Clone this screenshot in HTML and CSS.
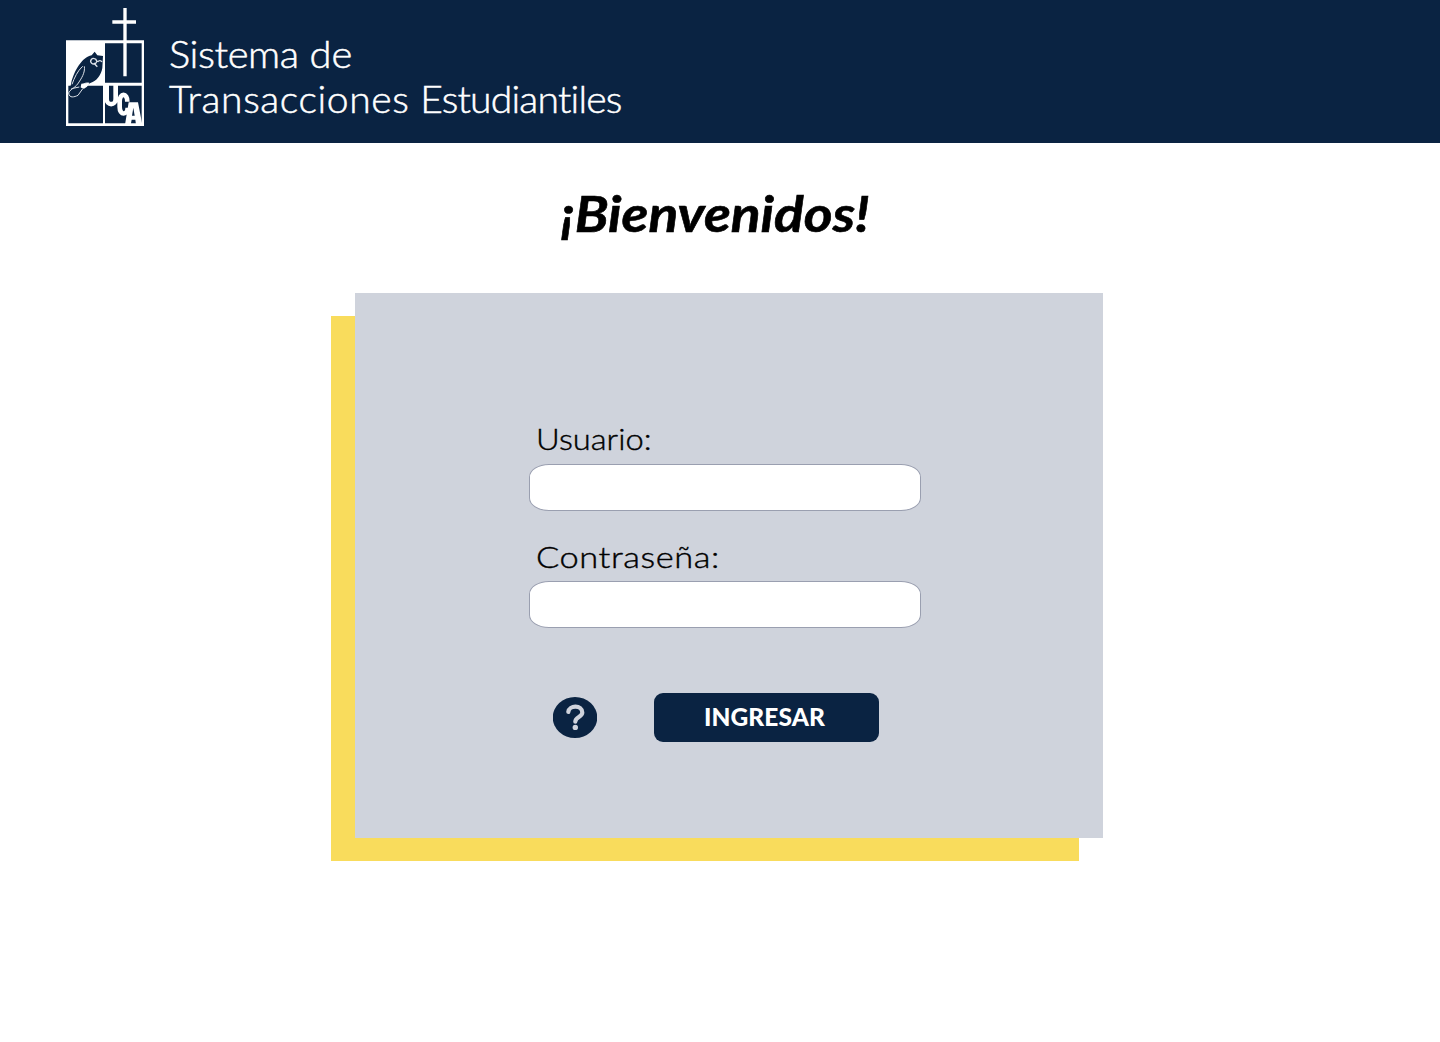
FILE: index.html
```html
<!DOCTYPE html>
<html lang="es">
<head>
<meta charset="utf-8">
<title>Sistema de Transacciones Estudiantiles</title>
<link rel="stylesheet" href="styles.css">
</head>
<body>
<header class="header">
  <svg class="logo" viewBox="33 24 234 354" role="img" aria-label="UCA">
    <path class="light" d="M33 121H267V378H33z"/>
    <path class="dark" d="M150 130H260V248H150zM40 257H144V370H40zM150 257H260V370H150z"/>
    <path class="light" d="M205 24H215V61H243V71H215V229H205V71H172V61H205z"/>
    <path class="dark" d="M119 155L127 166L144 168L142 204C138 226 126 242 106 249L88 259L65 287L42 292C39 275 47 263 49 247C58 213 80 172 110 166z"/>
    <path class="line" d="M88 199C91 218 79 236 68 252C58 265 44 269 41 279C43 296 58 291 69 286L84 265M49 266L73 261M83 199C67 213 58 234 51 253M102 250C93 246 81 253 79 262H87L101 254"/>
    <path class="light" d="M79 251L103 248L96 260L87 266L77 262z"/>
    <path class="eye" d="M120 177A8 8 0 1 0 121 189M121 176L126 184L120 193L127 200M128 186C132 180 138 181 141 186"/>
    <path class="letter" d="M155 253V296C155 318 182 318 182 296V253M217 305C217 278 194 278 194 304V321C194 348 218 345 218 323"/>
    <path class="light" d="M221 307H249L262 374H243L241 359H230L227 374H210z"/>
    <path class="dark" d="M235 323L239 347H231z"/>
  </svg>
  <h1 class="brand"><span class="brand-first"><span class="snug">Sistema</span> de</span><span class="brand-second"><span class="wide">Transacciones</span> <span class="tight">Estudiantiles</span></span></h1>
</header>
<main class="main">
  <h2 class="welcome">¡Bienvenidos!</h2>
  <form class="card">
    <label class="label label-user" for="user">Usuario:</label>
    <input class="field" id="user" type="text">
    <label class="label label-pass" for="pass">Contraseña:</label>
    <input class="field" id="pass" type="password">
    <div class="actions">
      <svg class="help" viewBox="0 0 44 42" role="img" aria-label="Ayuda">
        <ellipse class="help-disc" cx="22" cy="20.5" rx="22.3" ry="20.5"/>
        <path class="help-mark" d="M15.3 15C16 7.8 29.3 7.8 29.3 15.5C29.3 20 22.3 20 22.3 24.7"/>
        <circle class="help-dot" cx="22.3" cy="30.4" r="2.7"/>
      </svg>
      <button class="submit" type="button">INGRESAR</button>
    </div>
  </form>
</main>
</body>
</html>
```
FILE: styles.css
```css
* { box-sizing: border-box; }
body { margin: 0; min-height: 1042px; background: #fff; color: #000; font-family: Lato, "Open Sans", sans-serif; font-variant-ligatures: none; }
.header { display: flex; height: 143px; padding: 8px 66px 0; background: #0a2342; color: #fff; }
.logo { width: 78px; height: 118px; flex: none; }
.light { fill: #fff; }
.dark { fill: #0a2342; }
.line, .eye { fill: none; stroke: #dce1e8; stroke-width: 3; }
.eye { stroke-width: 4; }
.letter { fill: none; stroke: #fff; stroke-width: 14; }
.brand { display: flex; flex-direction: column; align-items: flex-start; margin: 23px 0 0 25px; font-size: 37.5px; line-height: 45px; font-weight: 300; white-space: nowrap; -webkit-text-stroke: 0.5px currentColor; }
.brand-first { transform: scaleX(1.063); transform-origin: left; }
.brand-second { transform: scaleX(1.041); transform-origin: left; }
.snug { letter-spacing: -0.4px; }
.wide { letter-spacing: 0.6px; }
.tight { letter-spacing: -0.75px; }
.main { display: flex; flex-direction: column; align-items: center; padding-bottom: 204px; }
.welcome { margin: 40px 10px 0 0; font-size: 49px; line-height: 60px; font-weight: 700; font-style: italic; transform: scaleX(1.125); -webkit-text-stroke: 0.6px currentColor; }
.card { display: flex; flex-direction: column; width: 748px; height: 545px; margin: 50px 0 0 18px; padding: 125px 182px 0 174px; background: #cfd3dc; box-shadow: -24px 23px 0 #f9dc5c; }
.label { align-self: flex-start; height: 40px; margin-left: 7px; font-size: 30px; line-height: 40px; font-weight: 300; white-space: nowrap; transform-origin: left; -webkit-text-stroke: 0.4px currentColor; }
.label-user { transform: scaleX(1.09); }
.label-pass { margin-top: 25px; letter-spacing: 0.5px; transform: scaleX(1.148); }
.field { width: 392px; height: 47px; margin: 6px 0 0; padding: 0 18px; border: 1px solid #9a9fb0; border-radius: 20px / 13px; background: #fff; font: inherit; font-size: 24px; outline: none; }
.label-pass + .field { margin-top: 5px; }
.actions { display: flex; align-items: center; gap: 57px; height: 49px; margin: 65px 0 0 24px; }
.help { width: 44px; height: 42px; }
.help-disc { fill: #0a2342; }
.help-mark { fill: none; stroke: #cfd3dc; stroke-width: 4.2; stroke-linecap: round; }
.help-dot { fill: #cfd3dc; }
.submit { width: 225px; height: 49px; padding: 0 4px 1px 0; border: 0; border-radius: 9px; background: #0a2342; color: #fff; font: 900 24.5px/48px Lato, sans-serif; letter-spacing: 0.1px; }
```
